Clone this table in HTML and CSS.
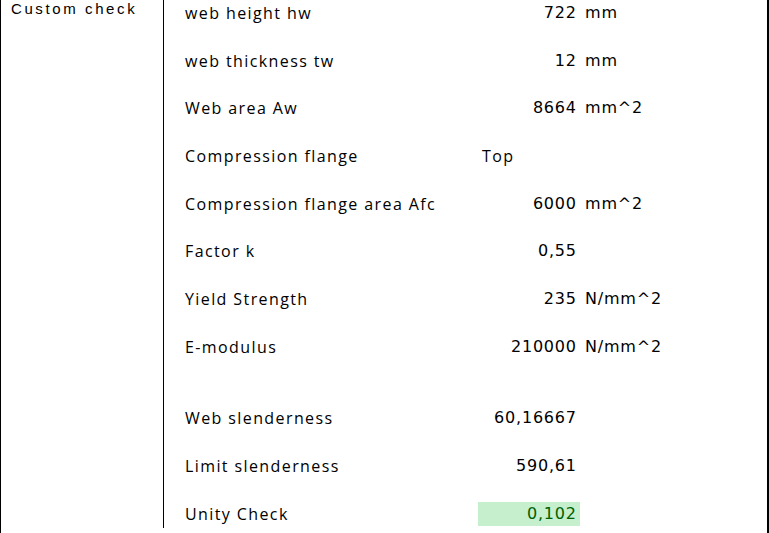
FILE: index.html
```html
<!DOCTYPE html>
<html>
<head>
<meta charset="utf-8">
<link rel="stylesheet" href="styles.css">
</head>
<body>
<div class="sheet">
  <div class="side">
    <div class="side-title">Custom check</div>
  </div>
  <div class="main">
    <div class="row"><div class="label">web height hw</div><div class="value">722</div><div class="unit">mm</div></div>
    <div class="row"><div class="label">web thickness tw</div><div class="value">12</div><div class="unit">mm</div></div>
    <div class="row"><div class="label">Web area Aw</div><div class="value">8664</div><div class="unit">mm^2</div></div>
    <div class="row"><div class="label">Compression flange</div><div class="value text">Top</div><div class="unit"></div></div>
    <div class="row"><div class="label">Compression flange area Afc</div><div class="value">6000</div><div class="unit">mm^2</div></div>
    <div class="row"><div class="label">Factor k</div><div class="value">0,55</div><div class="unit"></div></div>
    <div class="row"><div class="label">Yield Strength</div><div class="value">235</div><div class="unit">N/mm^2</div></div>
    <div class="row"><div class="label">E-modulus</div><div class="value">210000</div><div class="unit">N/mm^2</div></div>
    <div class="spacer"></div>
    <div class="row"><div class="label">Web slenderness</div><div class="value">60,16667</div><div class="unit"></div></div>
    <div class="row"><div class="label">Limit slenderness</div><div class="value">590,61</div><div class="unit"></div></div>
    <div class="row"><div class="label">Unity Check</div><div class="value ok">0,102</div><div class="unit"></div></div>
  </div>
</div>
</body>
</html>
```
FILE: styles.css
```css
html, body {
  margin: 0;
  padding: 0;
  background: #ffffff;
}
.sheet {
  display: flex;
  height: 533px;
  width: 769px;
  border-left: 1px solid #000;
  border-right: 2px solid #000;
  box-sizing: border-box;
  overflow: hidden;
}
.side {
  width: 162px;
  flex: none;
}
.side-title {
  font-family: "Liberation Sans", Arial, sans-serif;
  font-size: 15px;
  letter-spacing: 2.6px;
  color: #000;
  padding: 0 0 0 10px;
  line-height: 18px;
}
.main {
  flex: none;
  width: 602px;
  height: 528px;
  border-left: 1px solid #000;
  display: flex;
  flex-direction: column;
  gap: 23.67px;
  padding-top: 1px;
  box-sizing: border-box;
}
.spacer {
  height: 0.33px;
}
.row {
  display: grid;
  grid-template-columns: 314px 102px 1fr;
  height: 24px;
  align-items: center;
  font-family: "Open Sans", sans-serif;
  font-size: 16px;
  color: #000;
}
.label {
  padding-left: 21px;
  line-height: 24px;
  letter-spacing: 1.4px;
  white-space: nowrap;
}
.value {
  text-align: right;
  padding-right: 3.2px;
  line-height: 24px;
  font-family: "DejaVu Sans", Verdana, sans-serif;
  font-size: 16px;
  letter-spacing: 0.8px;
}
.value.text {
  text-align: left;
  padding-left: 4px;
  font-family: "Open Sans", sans-serif;
  font-size: 16px;
  letter-spacing: 1.4px;
}
.value.ok {
  background: #c6efce;
  color: #006100;
}
.unit {
  padding-left: 5px;
  line-height: 24px;
  font-family: "DejaVu Sans", Verdana, sans-serif;
  font-size: 16px;
  letter-spacing: 0.8px;
  white-space: nowrap;
}
```
